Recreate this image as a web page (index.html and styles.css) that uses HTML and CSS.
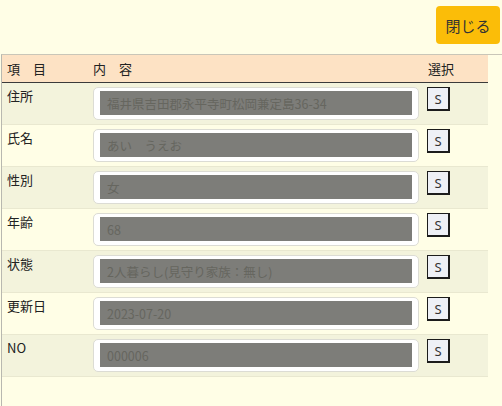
FILE: index.html
```html
<!DOCTYPE html>
<html lang="ja">
<head>
<meta charset="utf-8">
<link rel="stylesheet" href="styles.css">
</head>
<body>
<div class="top">
  <button class="close">閉じる</button>
</div>
<div class="panel">
  <table class="grid">
    <thead>
      <tr><th class="c1">項　目</th><th class="c2">内　容</th><th class="c3">選択</th></tr>
    </thead>
    <tbody>
      <tr class="odd"><td class="c1">住所</td><td class="c2"><div class="field"><div class="val">福井県吉田郡永平寺町松岡兼定島36-34</div></div></td><td class="c3"><button class="s">S</button></td></tr>
      <tr><td class="c1">氏名</td><td class="c2"><div class="field"><div class="val">あい　うえお</div></div></td><td class="c3"><button class="s">S</button></td></tr>
      <tr class="odd"><td class="c1">性別</td><td class="c2"><div class="field"><div class="val">女</div></div></td><td class="c3"><button class="s">S</button></td></tr>
      <tr><td class="c1">年齢</td><td class="c2"><div class="field"><div class="val">68</div></div></td><td class="c3"><button class="s">S</button></td></tr>
      <tr class="odd"><td class="c1">状態</td><td class="c2"><div class="field"><div class="val">2人暮らし(見守り家族：無し)</div></div></td><td class="c3"><button class="s">S</button></td></tr>
      <tr><td class="c1">更新日</td><td class="c2"><div class="field"><div class="val">2023-07-20</div></div></td><td class="c3"><button class="s">S</button></td></tr>
      <tr class="odd"><td class="c1">NO</td><td class="c2"><div class="field"><div class="val">000006</div></div></td><td class="c3"><button class="s">S</button></td></tr>
    </tbody>
  </table>
</div>
</body>
</html>
```
FILE: styles.css
```css
html, body {
  margin: 0;
  padding: 0;
  background: #fffee6;
  font-family: "Noto Sans CJK JP", "Noto Sans", sans-serif;
  font-size: 13px;
  color: #222;
  overflow: hidden;
}
.top {
  height: 54px;
  box-sizing: border-box;
  display: flex;
  justify-content: flex-end;
  align-items: flex-start;
  padding: 6px 2px 0 0;
}
.close {
  width: 64px;
  height: 38px;
  border: none;
  border-radius: 4px;
  background: #fbbd08;
  color: #333;
  font-family: "Noto Sans CJK JP", sans-serif;
  font-size: 15px;
  padding: 0;
  cursor: pointer;
}
.panel {
  margin-left: 1px;
  height: 352px;
  border-top: 1px solid #c9c6b8;
  border-left: 1px solid #b8b8b0;
}
.grid {
  width: 486px;
  border-collapse: collapse;
  border-spacing: 0;
}
.grid th {
  background: #fde2c4;
  height: 27px;
  padding: 0;
  text-align: left;
  font-weight: normal;
  border-bottom: 1px solid #3a3a3a;
  vertical-align: middle;
}
.grid td {
  height: 37px;
  padding: 4px 0 0 0;
  vertical-align: top;
  border-bottom: 1px solid #e9e8d0;
}
.grid tr.odd td {
  background: #f3f3dc;
}
.c1 {
  width: 83px;
}
.grid th.c1,
.grid td.c1 {
  padding-left: 5px;
}
.grid td.c1 {
  line-height: 18px;
}
.c2 {
  width: 326px;
}
.grid th.c2,
.grid td.c2 {
  padding-left: 3px;
}
.grid th.c3 {
  padding-left: 9px;
}
.grid td.c3 {
  padding-left: 8px;
}
.field {
  width: 326px;
  height: 33px;
  box-sizing: border-box;
  background: #fff;
  border: 1px solid #dcdcd4;
  border-radius: 5px;
  padding: 3px 6px 4px 6px;
}
.val {
  height: 100%;
  background: #7d7d79;
  color: #66665f;
  font-size: 12.5px;
  line-height: 26px;
  padding-left: 7px;
  white-space: nowrap;
  overflow: hidden;
}
.s {
  width: 23px;
  height: 24px;
  box-sizing: border-box;
  border: 2px solid #1c1c1c;
  border-top-width: 1px;
  border-left-width: 1px;
  background: #eef0f6;
  color: #333;
  font-family: "Noto Sans", sans-serif;
  font-size: 13px;
  padding: 0;
  margin-top: 0;
  display: block;
}
```
